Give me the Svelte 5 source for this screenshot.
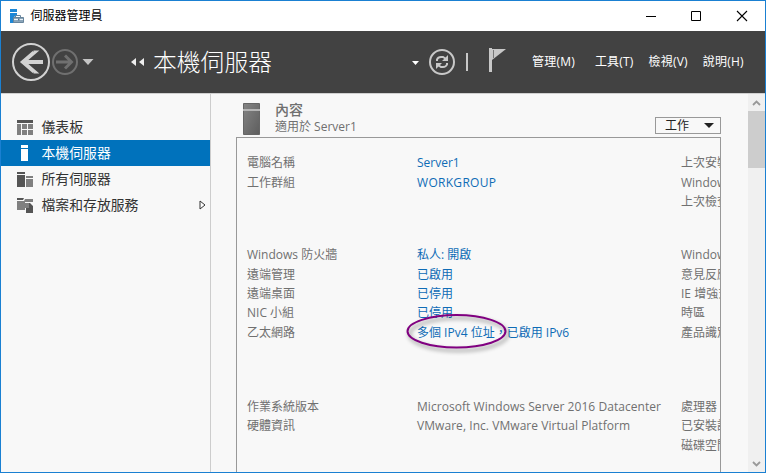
<script>
  const nav = [
    { id: 'dashboard', label: '儀表板' },
    { id: 'local', label: '本機伺服器', active: true },
    { id: 'all', label: '所有伺服器' },
    { id: 'files', label: '檔案和存放服務', more: true }
  ];
  const menus = [
    { label: '管理(M)', gap: 0 },
    { label: '工具(T)', gap: 20 },
    { label: '檢視(V)', gap: 15 },
    { label: '說明(H)', gap: 15 }
  ];
  const groups = [
    {
      gap: 0,
      rows: [
        ['電腦名稱', 'Server1', '上次安裝的更新'],
        ['工作群組', 'WORKGROUP', 'Windows Update'],
        ['', '', '上次檢查更新']
      ]
    },
    {
      gap: 34,
      rows: [
        ['Windows 防火牆', '私人: 開啟', 'Windows Defender'],
        ['遠端管理', '已啟用', '意見反應與診斷'],
        ['遠端桌面', '已停用', 'IE 增強式安全性設定'],
        ['NIC 小組', '已停用', '時區'],
        ['乙太網路', '多個 IPv4 位址，已啟用 IPv6', '產品識別碼']
      ]
    },
    {
      gap: 55,
      plain: true,
      rows: [
        ['作業系統版本', 'Microsoft Windows Server 2016 Datacenter', '處理器'],
        ['硬體資訊', 'VMware, Inc. VMware Virtual Platform', '已安裝記憶體 (RAM)'],
        ['', '', '磁碟空間總計']
      ]
    }
  ];
</script>

<div class="window">
  <div class="titlebar">
    <svg class="appicon" width="15" height="15" viewBox="0 0 15 15">
      <path d="M0 0h7v3H0zM0 4h7v2L4 8v6H0z" fill="#1d87d6" />
      <path d="M5.500 8V6.500h5V8" fill="none" stroke="#68859c" />
      <path d="M3.500 8.500h10v5h-10z" fill="#8aa4b8" stroke="#68859c" />
      <path d="M4 10.500h9" stroke="#e9f1f7" />
      <path d="M8 9.500h1.500v2H8z" fill="#56758d" />
    </svg>
    <span class="title">伺服器管理員</span>
    <svg class="controls" width="104" height="14" viewBox="0 0 104 14" fill="none" stroke="#000">
      <path d="M0 7.500h10M45.500 2.500h9v9h-9z" />
      <path d="M91 2l10 10M101 2L91 12" stroke-width="1.100" />
    </svg>
  </div>

  <header>
    <svg class="history" width="86" height="40" viewBox="0 0 86 40" fill="none">
      <circle cx="21" cy="20" r="18" stroke="#d2d2d2" stroke-width="2" />
      <path d="M33 20H12M23.500 10.500H24L13 20l11 9.500h-.5" stroke="#d2d2d2" stroke-width="4" />
      <circle cx="55" cy="20" r="12" stroke="#707070" stroke-width="2" />
      <path d="M46 20h15M55 13.500l6.500 6.500-6.500 6.500" stroke="#707070" stroke-width="2.900" />
      <path d="M72.500 17h11L78 23z" fill="#c5c5c5" />
    </svg>
    <svg class="crumb" width="14" height="8" viewBox="0 0 14 8">
      <path d="M5 0v8L0 4zM13 0v8L8 4z" fill="#eee" />
    </svg>
    <h1>本機伺服器</h1>
    <svg class="tools" width="96" height="32" viewBox="0 0 96 32" fill="none" stroke="#c8c8c8">
      <path d="M0 15h7l-3.500 4z" fill="#fff" stroke="none" />
      <circle cx="30" cy="16" r="12" stroke-width="2" />
      <path d="M25 15v-1.500q1-2.500 4-2.500h2l3 2M35 17v1.500q-1 2.500-4 2.500h-2l-3-2" stroke-width="2" />
      <path d="M36 9v6h-6zM24 23v-6h6z" fill="#c8c8c8" stroke="none" />
      <path d="M55 7v18" stroke-width="2" />
      <path d="M78.500 2v24" stroke-width="3" />
      <path d="M80 3h14L80 14z" fill="#c8c8c8" stroke="none" />
      <path d="M81.500 4v8" stroke="#777" />
    </svg>
    <nav class="menus">
      {#each menus as m}
        <span style="margin-left: {m.gap}px">{m.label}</span>
      {/each}
    </nav>
  </header>

  <div class="body">
    <aside>
      {#each nav as item}
        <div class="item" class:active={item.active}>
          <svg width="17" height="17" viewBox="0 0 17 17">
            {#if item.id === 'dashboard'}
              <path d="M0 1h16v3H0z" fill="#555" />
              <path d="M0 5h4v11H0zM5 5h5v5H5zM11 5h5v5h-5zM5 11h5v5H5zM11 11h5v5h-5z" fill="#808080" />
            {:else if item.id === 'local'}
              <path d="M4 0h7v3H4zM4 4h7v12H4z" fill="#fff" />
            {:else if item.id === 'all'}
              <path d="M0 1h8v2H0zM0 4h8v12H0z" fill="#555" />
              <path d="M9 5h7v2H9zM9 8h7v8H9z" fill="#808080" />
            {:else}
              <path d="M0 4h7l1-2h8v3H8v8H0z" fill="#808080" />
              <path d="M0 1h7L6 3H0zM9 6h4l3 3v7H9z" fill="#555" />
              <path d="M8 5h4v6H8z" fill="#808080" />
              <path d="M8 5.500h5.500l3 3" fill="none" stroke="#f8f8f8" />
            {/if}
          </svg>
          <span>{item.label}</span>
          {#if item.more}
            <svg class="more" width="7" height="10" viewBox="0 0 7 10">
              <path d="M1 1v8l5-4z" fill="#fff" stroke="#333" />
            </svg>
          {/if}
        </div>
      {/each}
    </aside>

    <main>
      <div class="head">
        <svg class="server" width="17" height="32" viewBox="0 0 17 32">
          <defs>
            <linearGradient id="metal" x2="1" y2="1">
              <stop stop-color="#858585" />
              <stop offset="1" stop-color="#5d5d5d" />
            </linearGradient>
          </defs>
          <path d="M.5.500h16v31H.5z" fill="url(#metal)" stroke="#666" />
          <path d="M0 6h17v2H0z" fill="#b5b5b5" />
        </svg>
        <div class="caption">
          <h2>內容</h2>
          <p>適用於 Server1</p>
        </div>
        <div class="tasks">
          <span>工作</span>
          <svg width="10" height="5" viewBox="0 0 10 5"><path d="M0 0h10L5 5z" fill="#222" /></svg>
        </div>
      </div>
      <section class="panel">
        {#each groups as g}
          <div class="group" class:plain={g.plain} style="margin-top: {g.gap}px">
            {#each g.rows as r}
              <span>{r[0]}</span>
              <span class="value" class:caps={r[1] === 'WORKGROUP'}>{r[1]}</span>
              <span>{r[2]}</span>
            {/each}
          </div>
        {/each}
      </section>
    </main>

    <div class="scroll">
      <svg width="17" height="17" viewBox="0 0 17 17"><path d="M5 11l3.500-3.500L12 11" /></svg>
      <div class="thumb"></div>
      <svg width="17" height="17" viewBox="0 0 17 17"><path d="M5 7l3.500 3.500L12 7" /></svg>
    </div>
  </div>

  <svg class="ring" width="112" height="50" viewBox="0 0 112 50">
    <ellipse cx="56.500" cy="26.300" rx="49" ry="16.200" />
  </svg>
</div>

<style>
  .window {
    position: relative;
    box-sizing: border-box;
    width: 766px;
    height: 473px;
    border: 1px solid #1a80d2;
    background: #f8f8f8;
    display: flex;
    flex-direction: column;
    overflow: hidden;
    font: 12px/19.35px 'Open Sans', 'Noto Sans CJK TC', sans-serif;
    color: #707070;
    white-space: nowrap;
  }
  svg { display: block; flex: none; }
  .titlebar {
    height: 30px;
    flex: none;
    background: #fff;
    color: #000;
    display: flex;
    align-items: center;
    padding: 0 15px 0 9px;
  }
  .title { margin-left: 5.5px; }
  .controls { margin-left: auto; }
  header {
    height: 62px;
    flex: none;
    background: #424242;
    border-bottom: 1px solid #d0d0d0;
    color: #fff;
    display: flex;
    align-items: center;
  }
  .history { margin-left: 9px; }
  .crumb { margin-left: 35px; }
  h1 {
    margin: 0 0 0 8px;
    width: 121px;
    font-size: 23.8px;
    line-height: 40px;
    font-weight: 300;
  }
  .tools { margin-left: 138px; }
  .menus { display: flex; margin-left: 24px; letter-spacing: 0.2px; }
  .body { flex: 1; min-height: 0; display: flex; }
  aside {
    width: 209px;
    flex: none;
    border-right: 1px solid #cdcdcd;
    padding-top: 20px;
    color: #333;
    font-size: 13.85px;
  }
  .item {
    height: 26px;
    display: flex;
    align-items: center;
    padding: 0 4px 0 16px;
  }
  .item span { margin-left: 7.5px; }
  .active { background: #0072bc; color: #fff; }
  .more { margin-left: auto; }
  main {
    width: 485px;
    flex: none;
    padding-left: 25px;
    display: flex;
    flex-direction: column;
  }
  .head { height: 43px; flex: none; display: flex; }
  .server { margin: 9px 0 0 7px; }
  .caption { margin: 7px 0 0 15px; }
  h2 { margin: 0; font-size: 14px; line-height: 18px; font-weight: 500; }
  p { margin: 0; line-height: 16px; }
  .tasks {
    box-sizing: border-box;
    width: 66px;
    height: 17px;
    margin: 23px 0 0 auto;
    border: 1px solid #999;
    color: #222;
    display: flex;
    align-items: center;
    justify-content: space-between;
    padding: 0 6px 0 9px;
  }
  .panel {
    flex: 1;
    min-height: 0;
    border: 1px solid #999;
    border-bottom: 0;
    padding: 15.3px 0 0 10px;
    overflow: hidden;
  }
  .group {
    display: grid;
    grid-template-columns: 170px 264px 120px;
    grid-auto-rows: 19.35px;
  }
  .value { color: #0f6cb6; }
  .plain .value { color: inherit; letter-spacing: 0.055px; }
  .value.caps { letter-spacing: 0.3px; }
  .scroll {
    width: 17px;
    margin-left: auto;
    background: #f0f0f0;
    display: flex;
    flex-direction: column;
  }
  .scroll path { fill: none; stroke: #999; stroke-width: 1.8; }
  .scroll svg:last-child { margin-top: auto; }
  .thumb { height: 57px; background: #cdcdcd; }
  .ring { position: absolute; left: 399px; top: 304px; overflow: visible; }
  .ring ellipse {
    fill: none;
    stroke: #800080;
    stroke-width: 2;
    filter: drop-shadow(2px 3px 2px rgba(0, 0, 0, 0.45));
  }
</style>
